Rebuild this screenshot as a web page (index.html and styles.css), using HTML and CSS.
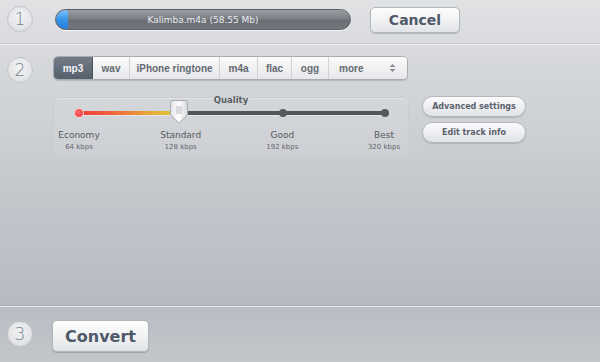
FILE: index.html
```html
<!DOCTYPE html>
<html>
<head>
<meta charset="utf-8">
<link rel="stylesheet" href="styles.css">
</head>
<body>
<div class="page">
  <section class="step step-1">
    <div class="num">1</div>
    <div class="progress">
      <div class="progress-fill"></div>
      <span class="progress-text">Kalimba.m4a (58.55 Mb)</span>
    </div>
    <button class="btn cancel">Cancel</button>
  </section>

  <section class="step step-2">
    <div class="num">2</div>
    <div class="step2-body">
      <div class="tabs">
        <div class="tab tab-mp3 active">mp3</div>
        <div class="tab tab-wav">wav</div>
        <div class="tab tab-iphone">iPhone ringtone</div>
        <div class="tab tab-m4a">m4a</div>
        <div class="tab tab-flac">flac</div>
        <div class="tab tab-ogg">ogg</div>
        <div class="tab tab-more">more
          <svg class="updown" width="7" height="10" viewBox="0 0 7 10"><path d="M0.5 4 L3.5 1 L6.5 4 Z M0.5 6 L3.5 9 L6.5 6 Z" fill="#8a8f96"/></svg>
        </div>
      </div>
      <div class="options">
        <div class="quality">
          <div class="quality-title">Quality</div>
          <div class="slider">
            <div class="track"></div>
            <div class="track-fill"></div>
            <div class="dot dot-red"></div>
            <div class="dot dot-good"></div>
            <div class="dot dot-best"></div>
            <div class="thumb">
              <svg width="18" height="24" viewBox="0 0 18 24">
                <defs>
                  <linearGradient id="tg" x1="0" y1="0" x2="1" y2="0">
                    <stop offset="0" stop-color="#e2e3e5"/>
                    <stop offset="0.5" stop-color="#ffffff"/>
                    <stop offset="1" stop-color="#d6d7da"/>
                  </linearGradient>
                </defs>
                <path d="M3 0.5 H15 Q17.5 0.5 17.5 3 V15 L9 23 L0.5 15 V3 Q0.5 0.5 3 0.5 Z" fill="url(#tg)" stroke="#a9acb1"/>
                <path d="M7 6 V14 M9 6 V14 M11 6 V14" stroke="#b8bbc0" stroke-width="1"/>
              </svg>
            </div>
          </div>
          <div class="levels">
            <div class="level"><span class="lname">Economy</span><span class="lrate">64 kbps</span></div>
            <div class="level"><span class="lname">Standard</span><span class="lrate">128 kbps</span></div>
            <div class="level"><span class="lname">Good</span><span class="lrate">192 kbps</span></div>
            <div class="level"><span class="lname">Best</span><span class="lrate">320 kbps</span></div>
          </div>
        </div>
        <div class="side-buttons">
          <button class="pill">Advanced settings</button>
          <button class="pill">Edit track info</button>
        </div>
      </div>
    </div>
  </section>

  <section class="step step-3">
    <div class="num">3</div>
    <button class="btn convert">Convert</button>
  </section>
</div>
</body>
</html>
```

FILE: styles.css
```css
html, body {
  margin: 0;
  padding: 0;
}
body {
  width: 600px;
  height: 362px;
  overflow: hidden;
  font-family: "DejaVu Sans", Verdana, sans-serif;
}
.page {
  width: 600px;
  height: 362px;
  display: flex;
  flex-direction: column;
  background: linear-gradient(#e1e2e4 0px, #d6d8db 60px, #c3c7cc 200px, #b6bbc2 306px);
}
.step {
  display: flex;
  align-items: flex-start;
  box-sizing: border-box;
}
.num {
  width: 26px;
  height: 26px;
  box-sizing: border-box;
  margin-left: 7px;
  border-radius: 50%;
  border: 1px solid #c3c5c9;
  background: radial-gradient(circle at 50% 40%, #f2f3f4 0%, #e4e5e7 60%, #d6d8db 100%);
  color: #7b7f86;
  font-size: 17px;
  font-weight: 300;
  line-height: 24px;
  text-align: center;
  font-family: "DejaVu Sans", sans-serif;
  flex: none;
}

/* step 1 */
.step-1 {
  height: 44px;
  padding-top: 6px;
  border-bottom: 1px solid #c9cacd;
  box-shadow: 0 1px 0 #eeeff0;
}
.progress {
  position: relative;
  margin-left: 22px;
  margin-top: 3px;
  width: 296px;
  height: 21px;
  box-sizing: border-box;
  border-radius: 11px;
  border: 1px solid #5c6066;
  background: linear-gradient(#9a9da2 0%, #7c8086 45%, #6a6e74 55%, #74787e 100%);
  display: flex;
  align-items: center;
  justify-content: center;
  overflow: hidden;
  box-shadow: 0 1px 0 rgba(255,255,255,0.7);
}
.progress-fill {
  position: absolute;
  left: 0;
  top: 0;
  bottom: 0;
  width: 12px;
  border-radius: 10px 2px 2px 10px;
  background: linear-gradient(#7cc0ff 0%, #3a95ea 50%, #1f7fe0 100%);
}
.progress-text {
  color: #e8ebef;
  font-size: 9px;
  position: relative;
}
.btn {
  box-sizing: border-box;
  border: 1px solid #b3b6bb;
  border-radius: 5px;
  background: linear-gradient(#fdfdfd 0%, #f1f2f3 50%, #e2e3e6 100%);
  box-shadow: 0 1px 1px rgba(0,0,0,0.18);
  font-family: "DejaVu Sans", sans-serif;
  font-weight: bold;
  color: #4f5968;
  padding: 0;
  cursor: pointer;
}
.cancel {
  margin-left: 19px;
  margin-top: 1px;
  width: 90px;
  height: 26px;
  font-size: 14px;
}

/* step 2 */
.step-2 {
  height: 262px;
  padding-top: 12px;
  border-bottom: 1px solid #a9aeb5;
}
.step-2 .num {
  margin-top: 1px;
}
.step2-body {
  margin-left: 20px;
  display: flex;
  flex-direction: column;
}
.tabs {
  display: flex;
  height: 24px;
  width: 355px;
  box-sizing: border-box;
  border: 1px solid #a8abb0;
  border-radius: 5px;
  overflow: hidden;
  box-shadow: 0 1px 1px rgba(0,0,0,0.15);
  background: linear-gradient(#fbfbfb, #e4e5e7);
}
.tab {
  box-sizing: border-box;
  height: 100%;
  border-right: 1px solid #cfd1d4;
  display: flex;
  align-items: center;
  justify-content: center;
  font-family: "Liberation Sans", Arial, sans-serif;
  font-size: 10px;
  font-weight: bold;
  white-space: nowrap;
  color: #646a72;
  background: linear-gradient(#fbfbfb, #e6e7e9);
}
.tab.active {
  background: linear-gradient(#737b87, #56606d);
  color: #f4f5f7;
  border-right: 1px solid #4c535d;
}
.tab-mp3 { width: 39px; }
.tab-wav { width: 37px; }
.tab-iphone { width: 90px; }
.tab-m4a { width: 38px; }
.tab-flac { width: 34px; }
.tab-ogg { width: 37px; }
.tab-more {
  flex: 1;
  border-right: none;
  justify-content: space-between;
  padding: 0 11px 0 10px;
}
.options {
  display: flex;
  margin-top: 17px;
}
.quality {
  width: 356px;
  height: 60px;
  box-sizing: border-box;
  border: 1px solid #cbcdd1;
  border-radius: 6px;
  background: rgba(255,255,255,0.08);
  box-shadow: inset 0 1px 0 rgba(255,255,255,0.3);
  position: relative;
}
.quality-title {
  text-align: center;
  font-size: 8.5px;
  font-weight: bold;
  color: #5a5e64;
  margin-top: -3px;
  height: 10px;
  line-height: 10px;
}
.slider {
  position: relative;
  height: 14px;
  margin: 1px 23px 0 25px;
}
.track {
  position: absolute;
  left: 0;
  right: 0;
  top: 5px;
  height: 4px;
  border-radius: 2px;
  background: #52565b;
  box-shadow: 0 1px 0 rgba(255,255,255,0.4);
}
.track-fill {
  position: absolute;
  left: 0;
  width: 102px;
  top: 5px;
  height: 4px;
  border-radius: 2px;
  background: linear-gradient(90deg, #f23c3e 0%, #f0603a 30%, #e9a03a 65%, #d8d23c 100%);
}
.dot {
  position: absolute;
  top: 3px;
  width: 8px;
  height: 8px;
  border-radius: 50%;
  background: #55595e;
  margin-left: -4px;
}
.dot-red {
  left: 0;
  top: 2px;
  width: 10px;
  height: 10px;
  margin-left: -5px;
  box-sizing: border-box;
  background: radial-gradient(circle at 45% 40%, #ff7070, #ec2d30);
  border: 1px solid #f8d0d0;
}
.dot-good { left: 204px; }
.dot-best { left: 306px; }
.thumb {
  position: absolute;
  left: 100px;
  top: -6px;
  margin-left: -9px;
  width: 18px;
  height: 24px;
}
.thumb svg { display: block; }
.levels {
  display: flex;
  justify-content: space-between;
  margin-top: 10px;
}
.level {
  width: 52px;
  display: flex;
  flex-direction: column;
  align-items: center;
}
.level:first-child { margin-left: -1px; }
.level:last-child { margin-right: -2px; }
.lname {
  font-size: 9px;
  color: #555a60;
  line-height: 11px;
}
.lrate {
  font-size: 7px;
  color: #62666c;
  margin-top: 2px;
  line-height: 8px;
}
.side-buttons {
  display: flex;
  flex-direction: column;
  gap: 5px;
  margin-left: 13px;
  margin-top: -1px;
}
.pill {
  width: 104px;
  height: 21px;
  box-sizing: border-box;
  border: 1px solid #b5b8bd;
  border-radius: 11px;
  background: linear-gradient(#fbfbfc 0%, #eeeff1 50%, #dfe1e4 100%);
  box-shadow: 0 1px 1px rgba(0,0,0,0.15);
  font-family: "DejaVu Sans", sans-serif;
  font-size: 8px;
  font-weight: bold;
  color: #5b626d;
  padding: 0;
}

/* step 3 */
.step-3 {
  flex: 1;
  padding-top: 13px;
  border-top: 1px solid #e9ebed;
  background: linear-gradient(#b9bec5, #c3c6ca);
}
.step-3 .num {
  margin-top: 1px;
}
.convert {
  margin-left: 19px;
  width: 97px;
  height: 32px;
  font-size: 16px;
}
```
